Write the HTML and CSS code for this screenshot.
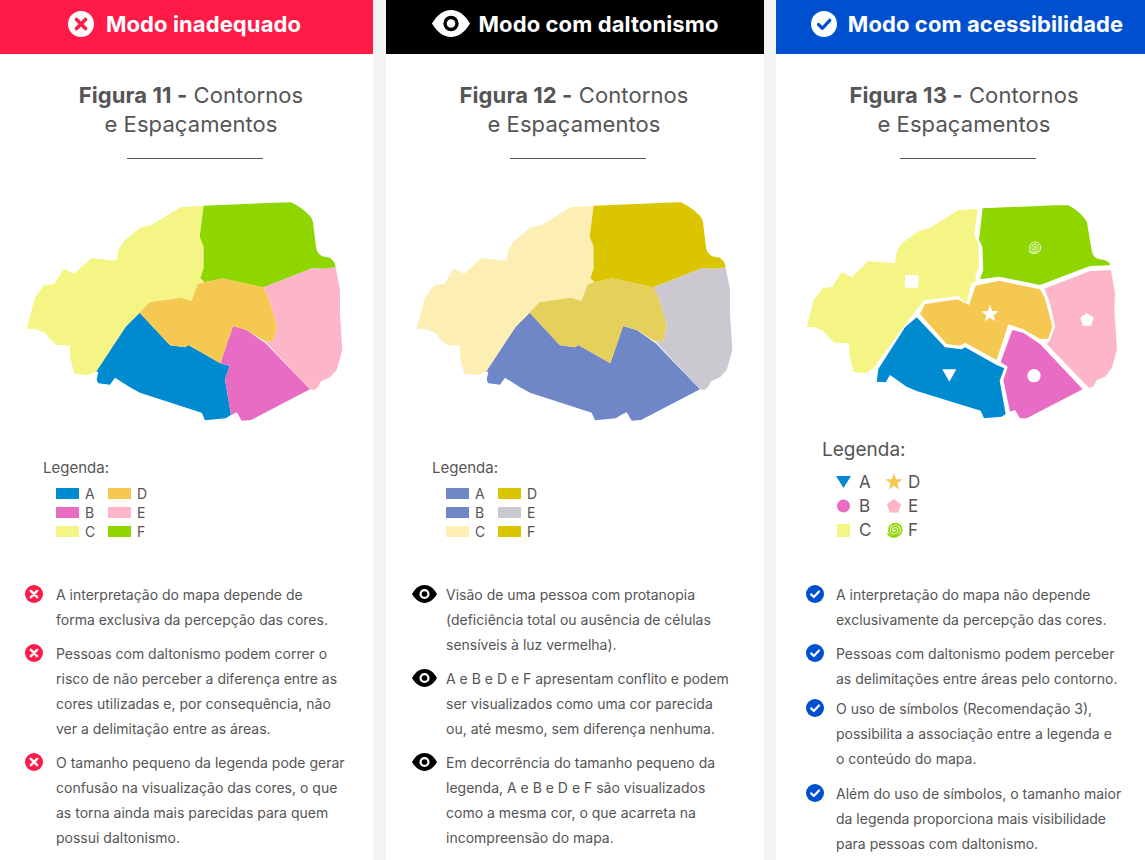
FILE: index.html
```html
<!DOCTYPE html>
<html lang="pt-BR">
<head>
    <meta charset="UTF-8">
    <meta name="viewport" content="width=device-width, initial-scale=1.0">
    <title>Contornos e Espaçamentos</title>
    <link rel="stylesheet" href="styles.css">
</head>
<body>
    <!-- shared shapes -->
    <svg class="defs" aria-hidden="true">
        <defs>
            <polygon id="area-a" points="374,368 465,466 510,472 520,465 616,520 644,528 630,568 648,675 632,685 570,691 560,668 375,608 345,592 300,563 285,584 250,580 245,570 250,545 243,545 332,410"/>
            <polygon id="area-b" points="654,408 695,420 752,460 885,598 708,690 680,692 665,667 648,675 630,568 644,528 616,520"/>
            <polygon id="area-ab" points="374,368 465,466 510,472 520,465 616,520 654,408 695,420 752,460 885,598 708,690 680,692 665,667 648,675 632,685 570,691 560,668 375,608 345,592 300,563 285,584 250,580 245,570 250,545 243,545 332,410"/>
            <polygon id="area-c" points="35,416 60,322 87,286 118,282 146,236 178,251 229,204 304,212 310,180 325,155 378,112 408,106 497,52 566,47 554,140 566,170 566,235 556,265 564,278 548,282 530,333 497,323 403,337 374,368 332,410 243,545 218,556 178,551 165,500 165,467 125,464 108,450 90,428 60,417"/>
            <polygon id="area-d" points="548,282 568,277 622,265 745,292 760,320 786,408 775,452 752,455 695,420 654,408 616,520 520,465 510,472 465,466 374,368 403,337 497,323 530,333"/>
            <polygon id="area-e" points="745,292 892,234 925,236 962,232 975,300 975,370 982,480 965,540 945,562 918,574 910,590 898,600 885,598 752,455 775,452 786,408 760,320"/>
            <path id="area-f" d="M566 47L780 38L828 37Q860 52 885 78Q895 90 895 105L903 170Q905 192 925 200Q958 198 962 232L925 236L892 234L745 292L622 265L568 277L556 265L566 235L566 170L554 140Z"/>
            <path id="spiral" d="M0 0a2 2 0 0 1 4 0a4 4 0 0 1-8 0a6 6 0 0 1 12 0a8 8 0 0 1-16 0a10 10 0 0 1 20 0a12 12 0 0 1-22 5"/>
        </defs>
        <symbol id="icon-x" viewBox="0 0 26 26">
            <circle cx="13" cy="13" r="13" class="icon-bg"/>
            <path d="M8.5 8.5l9 9M17.500 8.500l-9 9" class="icon-mark" stroke-width="3.600" stroke-linecap="round"/>
        </symbol>
        <symbol id="icon-check" viewBox="0 0 26 26">
            <circle cx="13" cy="13" r="13" class="icon-bg"/>
            <path d="M7.500 13.500l3.800 3.800l7.500-8" class="icon-mark" fill="none" stroke-width="3.200" stroke-linecap="round" stroke-linejoin="round"/>
        </symbol>
        <symbol id="icon-eye" viewBox="0 0 38 27">
            <path d="M0 13.500C5 5 11.500 0 19 0S33 5 38 13.500C33 22 26.500 27 19 27S5 22 0 13.500Z" class="icon-bg"/>
            <circle cx="19" cy="13.500" r="6" fill="none" class="icon-mark" stroke-width="3.400"/>
        </symbol>
    </svg>

    <main class="columns">
        <section class="panel panel-bad">
            <header class="mode-bar mode-bad">
                <svg class="mode-icon mode-icon-round invert"><use href="#icon-x"/></svg>
                <span>Modo inadequado</span>
            </header>
            <h2 class="figure-title"><b>Figura 11 -</b> Contornos<br>e Espaçamentos</h2>
            <div class="rule"></div>
            <svg class="map" viewBox="0 0 1020 720">
                <use href="#area-a" class="c-a"/>
                <use href="#area-b" class="c-b"/>
                <use href="#area-c" class="c-c"/>
                <use href="#area-d" class="c-d"/>
                <use href="#area-e" class="c-e"/>
                <use href="#area-f" class="c-f"/>
            </svg>
            <div class="legend">
                <div class="legend-title">Legenda:</div>
                <div class="legend-grid">
                    <div class="legend-item"><i class="swatch c-a"></i>A</div>
                    <div class="legend-item"><i class="swatch c-d"></i>D</div>
                    <div class="legend-item"><i class="swatch c-b"></i>B</div>
                    <div class="legend-item"><i class="swatch c-e"></i>E</div>
                    <div class="legend-item"><i class="swatch c-c"></i>C</div>
                    <div class="legend-item"><i class="swatch c-f"></i>F</div>
                </div>
            </div>
            <ul class="notes">
                <li><svg class="note-icon red"><use href="#icon-x"/></svg><p>A interpretação do mapa depende de<br>forma exclusiva da percepção das cores.</p></li>
                <li><svg class="note-icon red"><use href="#icon-x"/></svg><p>Pessoas com daltonismo podem correr o<br>risco de não perceber a diferença entre as<br>cores utilizadas e, por consequência, não<br>ver a delimitação entre as áreas.</p></li>
                <li><svg class="note-icon red"><use href="#icon-x"/></svg><p>O tamanho pequeno da legenda pode gerar<br>confusão na visualização das cores, o que<br>as torna ainda mais parecidas para quem<br>possui daltonismo.</p></li>
            </ul>
        </section>

        <section class="panel">
            <header class="mode-bar mode-blind">
                <svg class="mode-icon mode-icon-eye invert"><use href="#icon-eye"/></svg>
                <span>Modo com daltonismo</span>
            </header>
            <h2 class="figure-title"><b>Figura 12 -</b> Contornos<br>e Espaçamentos</h2>
            <div class="rule"></div>
            <svg class="map" viewBox="0 0 1020 720">
                <use href="#area-ab" class="p-ab"/>
                <use href="#area-c" class="p-c"/>
                <use href="#area-d" class="p-d"/>
                <use href="#area-e" class="p-e"/>
                <use href="#area-f" class="p-f"/>
            </svg>
            <div class="legend">
                <div class="legend-title">Legenda:</div>
                <div class="legend-grid">
                    <div class="legend-item"><i class="swatch p-ab"></i>A</div>
                    <div class="legend-item"><i class="swatch p-f"></i>D</div>
                    <div class="legend-item"><i class="swatch p-ab"></i>B</div>
                    <div class="legend-item"><i class="swatch p-e"></i>E</div>
                    <div class="legend-item"><i class="swatch p-c"></i>C</div>
                    <div class="legend-item"><i class="swatch p-f"></i>F</div>
                </div>
            </div>
            <ul class="notes">
                <li><svg class="note-icon note-eye dark"><use href="#icon-eye"/></svg><p>Visão de uma pessoa com protanopia<br>(deficiência total ou ausência de células<br>sensíveis à luz vermelha).</p></li>
                <li><svg class="note-icon note-eye dark"><use href="#icon-eye"/></svg><p>A e B e D e F apresentam conflito e podem<br>ser visualizados como uma cor parecida<br>ou, até mesmo, sem diferença nenhuma.</p></li>
                <li><svg class="note-icon note-eye dark"><use href="#icon-eye"/></svg><p>Em decorrência do tamanho pequeno da<br>legenda, A e B e D e F são visualizados<br>como a mesma cor, o que acarreta na<br>incompreensão do mapa.</p></li>
            </ul>
        </section>

        <section class="panel panel-good">
            <header class="mode-bar mode-good">
                <svg class="mode-icon mode-icon-round invert-blue"><use href="#icon-check"/></svg>
                <span>Modo com acessibilidade</span>
            </header>
            <h2 class="figure-title"><b>Figura 13 -</b> Contornos<br>e Espaçamentos</h2>
            <div class="rule"></div>
            <svg class="map" viewBox="0 0 1020 720">
                <polygon class="c-c" points="35,410 57,328 85,294 112,290 140,246 170,262 220,213 300,220 305,185 320,160 373,122 403,115 490,60 548,57 538,135 551,165 551,230 540,262 545,272 528,282 515,340 490,318 388,331 360,365 320,418 235,535 212,550 175,546 163,495 163,460 120,458 105,447 88,425 60,412"/>
                <path class="c-f" d="M563 55L780 46L820 46Q855 65 872 90Q878 98 878 110L890 180Q893 205 915 208Q945 212 945 226L885 228L735 285L612 260L555 268L565 240L562 170L552 150Z"/>
                <polygon class="c-d" points="542,287 612,272 735,298 750,325 772,408 760,447 735,447 685,418 640,403 605,510 510,458 495,467 455,462 375,372 390,342 488,328 522,345"/>
                <polygon class="c-e" points="748,296 885,243 948,241 960,310 958,360 966,480 950,535 930,560 905,570 895,590 882,594 755,462 765,450 780,410 765,340"/>
                <polygon class="c-b" points="652,420 685,428 735,462 863,598 695,685 675,685 660,660 645,665 625,570 638,530 617,516"/>
                <polygon class="c-a" points="365,382 450,472 500,478 510,472 605,525 628,535 614,572 632,672 620,680 567,685 557,662 365,603 335,590 285,555 272,577 245,575 250,537 330,412"/>
                <rect class="mark" x="330" y="255" width="40" height="38"/>
                <polygon class="mark" points="585,345 591.500,363.100 610.700,363.700 595.500,375.400 600.900,393.800 585,383 569.100,393.800 574.500,375.400 559.300,363.700 578.500,363.100"/>
                <polygon class="mark" points="442,538 484,538 463,575"/>
                <circle class="mark" cx="717" cy="557" r="20"/>
                <polygon class="mark" points="876,369 896,383.500 888.300,407 863.700,407 856,383.500"/>
                <use href="#spiral" transform="translate(717,173) scale(1.700)" class="spiral-white"/>
            </svg>
            <div class="legend legend-big">
                <div class="legend-title">Legenda:</div>
                <div class="legend-grid">
                    <div class="legend-item"><svg class="symbol" viewBox="0 0 16 16"><polygon class="c-a" points="0,2 15,2 7.500,14"/></svg>A</div>
                    <div class="legend-item"><svg class="symbol symbol-wide" viewBox="0 0 18 18"><polygon class="c-d" points="9,0 11.100,6.200 17.600,6.200 12.400,10.200 14.300,16.500 9,12.700 3.700,16.500 5.600,10.200 0.400,6.200 6.900,6.200"/></svg>D</div>
                    <div class="legend-item"><svg class="symbol" viewBox="0 0 16 16"><circle class="c-b" cx="7.500" cy="8" r="6.500"/></svg>B</div>
                    <div class="legend-item"><svg class="symbol symbol-wide" viewBox="0 0 18 18"><polygon class="c-e" points="9,2 16,7.200 13.300,15.500 4.700,15.500 2,7.200"/></svg>E</div>
                    <div class="legend-item"><svg class="symbol" viewBox="0 0 16 16"><rect class="c-c" x="1" y="2" width="13" height="13"/></svg>C</div>
                    <div class="legend-item"><svg class="symbol symbol-wide" viewBox="-14 -14 28 28"><use href="#spiral" class="spiral-green"/></svg>F</div>
                </div>
            </div>
            <ul class="notes">
                <li><svg class="note-icon blue"><use href="#icon-check"/></svg><p>A interpretação do mapa não depende<br>exclusivamente da percepção das cores.</p></li>
                <li><svg class="note-icon blue"><use href="#icon-check"/></svg><p>Pessoas com daltonismo podem perceber<br>as delimitações entre áreas pelo contorno.</p></li>
                <li class="tight"><svg class="note-icon blue"><use href="#icon-check"/></svg><p>O uso de símbolos (Recomendação 3),<br>possibilita a associação entre a legenda e<br>o conteúdo do mapa.</p></li>
                <li class="loose"><svg class="note-icon blue"><use href="#icon-check"/></svg><p>Além do uso de símbolos, o tamanho maior<br>da legenda proporciona mais visibilidade<br>para pessoas com daltonismo.</p></li>
            </ul>
        </section>
    </main>
</body>
</html>
```
FILE: styles.css
```css
html, body {
    margin: 0;
    height: 100%;
    overflow: hidden;
}

body {
    font-family: 'Inter', 'Liberation Sans', sans-serif;
    background: #f4f4f4;
    color: #555;
}

.defs {
    position: absolute;
    width: 0;
    height: 0;
}

.columns {
    display: grid;
    grid-template-columns: 374px 378px 369px;
    column-gap: 12px;
    height: 860px;
}

.panel {
    background: white;
    overflow: hidden;
}

.panel-bad {
    margin-right: 1px;
}

.mode-bar {
    height: 54px;
    box-sizing: border-box;
    padding-bottom: 6px;
    display: flex;
    justify-content: center;
    align-items: center;
    color: white;
    font-size: 22px;
    font-weight: 700;
    letter-spacing: 0.1px;
}

.mode-bad {
    background: #ff1a47;
    gap: 12px;
    padding-right: 4px;
}

.mode-blind {
    background: black;
    gap: 9px;
}

.mode-good {
    background: #004fce;
    gap: 11px;
    padding-left: 13px;
}

.mode-icon-round {
    width: 26px;
    height: 26px;
    margin-top: -1px;
}

.mode-icon-eye {
    width: 38px;
    height: 27px;
    margin-top: -2px;
}

/* icon colours: background shape and mark inside it */
.icon-bg { fill: var(--bg); }
.icon-mark { stroke: var(--fg); }

.invert { --bg: white; --fg: #ff1a47; }
.mode-blind .invert { --fg: black; }
.invert-blue { --bg: white; --fg: #004fce; }
.red { --bg: #ff1a47; --fg: white; }
.dark { --bg: black; --fg: white; }
.blue { --bg: #004fce; --fg: white; }

.figure-title {
    width: 376px;
    margin: 27px 0 0;
    font-size: 22px;
    font-weight: 400;
    line-height: 29px;
    letter-spacing: 0.09px;
    text-align: center;
}

.figure-title b {
    font-weight: 700;
}

.rule {
    width: 136px;
    height: 1px;
    margin: 19px 0 0 124px;
    background: #555;
}

.map {
    display: block;
    width: 340px;
    height: 240px;
    margin: 31px 0 0 19px;
}

.panel-bad .figure-title { margin-left: 3px; }
.panel-bad .rule { margin-left: 127px; }
.panel-bad .map { margin-left: 15px; }
.panel-bad .legend { margin-left: 43px; }
.panel-bad .legend-grid { margin-left: 13px; }
.panel-bad .notes { margin-left: 25px; }
.panel-bad .note-icon { margin-right: 13px; }
.panel-good .notes { margin-left: 30px; }

.c-a { fill: #008acf; background: #008acf; }
.c-b { fill: #e96cc4; background: #e96cc4; }
.c-c { fill: #f5f586; background: #f5f586; }
.c-d { fill: #f4c851; background: #f4c851; }
.c-e { fill: #fcb6c8; background: #fcb6c8; }
.c-f { fill: #8fd500; background: #8fd500; }

.p-ab { fill: #6f87c7; background: #6f87c7; }
.p-c { fill: #fdeeb3; background: #fdeeb3; }
.p-d { fill: #e5d05b; }
.p-e { fill: #cbc9cf; background: #cbc9cf; }
.p-f { fill: #dac500; background: #dac500; }

.mark { fill: white; }

.spiral-white {
    fill: none;
    stroke: white;
    stroke-width: 1.600;
}

.spiral-green {
    fill: none;
    stroke: #8fd500;
    stroke-width: 2.600;
}

.legend {
    height: 152px;
    margin-left: 46px;
    padding-top: 28px;
    box-sizing: border-box;
}

.legend-title {
    font-size: 15px;
    line-height: 20px;
}

.legend-grid {
    display: grid;
    grid-template-columns: 52px 52px;
    grid-auto-rows: 19px;
    margin: 6px 0 0 14px;
}

.legend-item {
    display: flex;
    align-items: center;
    gap: 6px;
    font-size: 14px;
}

.swatch {
    width: 23px;
    height: 11px;
}

.legend-big {
    padding-top: 8px;
}

.legend-big .legend-title {
    font-size: 19px;
    line-height: 24px;
}

.legend-big .legend-grid {
    grid-template-columns: 49px 49px;
    grid-auto-rows: 24px;
    margin-top: 8px;
}

.legend-big .legend-item {
    gap: 7px;
    font-size: 17px;
}

.symbol {
    width: 16px;
    height: 16px;
}

.symbol-wide {
    width: 18px;
    height: 18px;
    margin-right: -2px;
}

.notes {
    list-style: none;
    margin: 0 0 0 26px;
    padding: 0;
}

.notes li {
    display: flex;
    margin-bottom: 9px;
}

.notes li.tight { margin-top: -4px; }
.notes li.loose { margin-top: 10px; }

.notes p {
    margin: 0;
    font-size: 14px;
    line-height: 25px;
    white-space: nowrap;
}

.note-icon {
    flex: none;
    width: 18px;
    height: 18px;
    margin: 3px 12px 0 0;
}

.note-eye {
    width: 25px;
    height: 18px;
    margin: 3px 9px 0 0;
}
```
